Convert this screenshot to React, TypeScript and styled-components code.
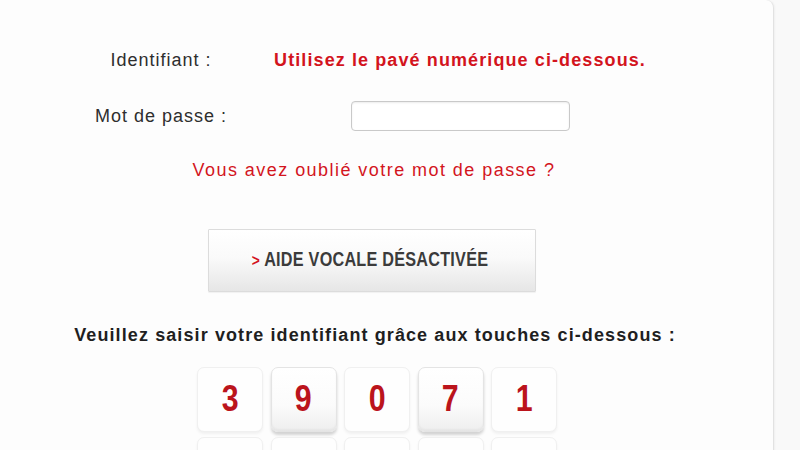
import React from "react";
import styled, { createGlobalStyle, css } from "styled-components";

const GlobalStyle = createGlobalStyle`
  html, body {
    margin: 0;
    padding: 0;
    background: #f9f9f9;
    font-family: "Liberation Sans", Arial, sans-serif;
    overflow: hidden;
  }
`;

const Page = styled.div`
  display: flex;
  width: 800px;
  height: 450px;
  overflow: hidden;
  background: #f9f9f9;
`;

const Card = styled.main`
  width: 773px;
  min-height: 520px;
  background: #fdfdfd;
  border-right: 1px solid #e2e2e2;
  border-top-right-radius: 8px;
  box-shadow: 1px 0 2px rgba(0, 0, 0, 0.04);
  display: flex;
  flex-direction: column;
  align-items: center;
`;

const Content = styled.div`
  width: 750px;
  align-self: flex-start;
  display: flex;
  flex-direction: column;
  align-items: center;
`;

const FormGrid = styled.div`
  align-self: flex-start;
  margin-top: 48px;
  margin-left: 50px;
  display: grid;
  grid-template-columns: 222px 376px;
  grid-template-rows: 24px 30px;
  row-gap: 29px;
  align-items: center;
  justify-items: center;
`;

const Label = styled.label`
  font-size: 18px;
  line-height: 24px;
  color: #2e2e2e;
  letter-spacing: 1px;
  white-space: nowrap;
`;

const Hint = styled.span`
  font-size: 18px;
  line-height: 24px;
  font-weight: bold;
  color: #d3141d;
  letter-spacing: 1.1px;
  white-space: nowrap;
`;

const PasswordInput = styled.input`
  box-sizing: border-box;
  width: 219px;
  height: 30px;
  margin: 0;
  border: 1px solid #c9c9c9;
  border-radius: 4px;
  background: #fff;
  box-shadow: inset 0 1px 2px rgba(0, 0, 0, 0.08);
  outline: none;
`;

const ForgotLink = styled.a`
  margin-top: 27px;
  margin-right: 2px;
  font-size: 18px;
  line-height: 24px;
  color: #d3151d;
  letter-spacing: 1.45px;
  text-decoration: none;
  white-space: nowrap;
`;

const VoiceButton = styled.button`
  box-sizing: border-box;
  margin: 47px 6px 0 0;
  width: 328px;
  height: 63px;
  border: 1px solid #dcdcdc;
  border-radius: 1px;
  background: linear-gradient(to bottom, #ffffff 0%, #fafafa 45%, #e6e6e6 100%);
  box-shadow: 0 1px 1px rgba(0, 0, 0, 0.05);
  display: flex;
  align-items: center;
  justify-content: center;
  padding: 0 5px 2px 0;
`;

const VoiceLabel = styled.span`
  display: inline-block;
  font-family: "Liberation Sans", Arial, sans-serif;
  font-weight: bold;
  font-size: 20px;
  letter-spacing: 0.3px;
  color: #3b3b3b;
  text-transform: uppercase;
  white-space: nowrap;
  transform: scaleX(0.81);
  transform-origin: center;
`;

const Chevron = styled.span`
  color: #d3141d;
  font-size: 17px;
`;

const Heading = styled.h2`
  margin: 31px 0 0 0;
  font-size: 18px;
  line-height: 24px;
  font-weight: bold;
  color: #1f1f1f;
  letter-spacing: 1.1px;
  white-space: nowrap;
`;

const Keypad = styled.div`
  margin-top: 20px;
  margin-left: 4px;
  display: grid;
  grid-template-columns: repeat(5, 66px);
  grid-auto-rows: 65px;
  column-gap: 7.5px;
  row-gap: 5px;
`;

const Key = styled.button<{ $raised?: boolean }>`
  box-sizing: border-box;
  margin: 0;
  padding: 0 0 2px 0;
  border-radius: 7px;
  border: 1px solid #f0f0f0;
  background: #fefefe;
  box-shadow: 0 2px 3px rgba(0, 0, 0, 0.05);
  display: flex;
  align-items: center;
  justify-content: center;
  ${(p) =>
    p.$raised &&
    css`
      border: 1px solid #e4e4e4;
      background: linear-gradient(to bottom, #ffffff 0%, #fbfbfb 60%, #eeeeee 100%);
      box-shadow: 0 3px 3px rgba(0, 0, 0, 0.17), inset 0 -2px 2px rgba(0, 0, 0, 0.04);
    `}
`;

const Digit = styled.span`
  display: inline-block;
  font-family: "Liberation Sans", Arial, sans-serif;
  font-weight: bold;
  font-size: 37px;
  line-height: 1;
  color: #bb141c;
  transform: scaleX(0.82);
`;

const keys: { label: string; raised?: boolean }[] = [
  { label: "3" },
  { label: "9", raised: true },
  { label: "0" },
  { label: "7", raised: true },
  { label: "1" },
  { label: "" },
  { label: "" },
  { label: "" },
  { label: "" },
  { label: "" },
];

export default function App() {
  return (
    <>
      <GlobalStyle />
      <Page>
        <Card>
          <Content>
            <FormGrid>
              <Label>Identifiant :</Label>
              <Hint>Utilisez le pavé numérique ci-dessous.</Hint>
              <Label>Mot de passe :</Label>
              <PasswordInput type="password" />
            </FormGrid>
            <ForgotLink href="#">Vous avez oublié votre mot de passe ?</ForgotLink>
            <VoiceButton>
              <VoiceLabel>
                <Chevron>&gt;</Chevron> Aide vocale désactivée
              </VoiceLabel>
            </VoiceButton>
            <Heading>Veuillez saisir votre identifiant grâce aux touches ci-dessous :</Heading>
            <Keypad>
              {keys.map((k, i) => (
                <Key key={i} $raised={k.raised}>
                  {k.label && <Digit>{k.label}</Digit>}
                </Key>
              ))}
            </Keypad>
          </Content>
        </Card>
      </Page>
    </>
  );
}
